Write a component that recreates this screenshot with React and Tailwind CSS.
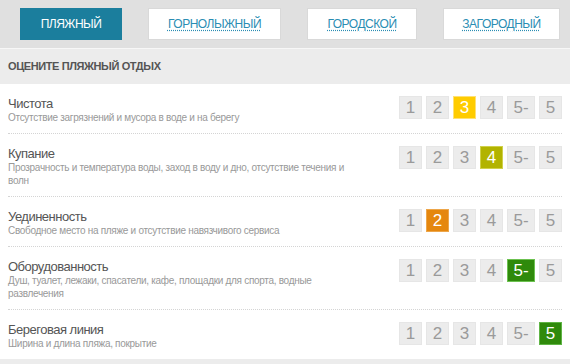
const tabs = [
  { label: "ПЛЯЖНЫЙ", w: "w-[102px]", active: true },
  { label: "ГОРНОЛЫЖНЫЙ", w: "w-[133px]" },
  { label: "ГОРОДСКОЙ", w: "w-[110px]" },
  { label: "ЗАГОРОДНЫЙ", w: "w-[117px]" },
];

const marks = ["1", "2", "3", "4", "5-", "5"];

const activeStyles = {
  "2": "bg-[#e5870e] border-[#eda64a] text-white",
  "3": "bg-[#ffcc00] border-[#ffe173] text-white",
  "4": "bg-[#b2b300] border-[#cfd04a] text-white",
  "5-": "bg-[#2f8a0b] border-[#6cc150] text-white",
  "5": "bg-[#2f8a0b] border-[#5fb445] text-white",
};

const rows = [
  { title: "Чистота", desc: "Отсутствие загрязнений и мусора в воде и на берегу", score: "3" },
  {
    title: "Купание",
    desc: "Прозрачность и температура воды, заход в воду и дно, отсутствие течения и волн",
    score: "4",
  },
  { title: "Уединенность", desc: "Свободное место на пляже и отсутствие навязчивого сервиса", score: "2" },
  {
    title: "Оборудованность",
    desc: "Душ, туалет, лежаки, спасатели, кафе, площадки для спорта, водные развлечения",
    score: "5-",
  },
  { title: "Береговая линия", desc: "Ширина и длина пляжа, покрытие", score: "5", last: true },
];

function Rating({ score }) {
  return (
    <div className="flex gap-[4px] shrink-0">
      {marks.map((m) => (
        <div
          key={m}
          className={`h-[23px] ${m === "5-" ? "w-[28px]" : "w-[23px]"} flex items-center justify-center border text-[17px] leading-none ${
            m === score ? activeStyles[m] : "bg-[#ececec] border-[#e6e6e6] text-[#9a9a9a]"
          }`}
        >
          {m}
        </div>
      ))}
    </div>
  );
}

export default function App() {
  return (
    <div className="w-[570px] min-h-[364px] bg-white font-['Liberation_Sans',Arial,sans-serif]">
      {/* tabs */}
      <div className="h-[49px] bg-[#e0e0e0] border-b border-[#f7f7f7] flex items-start gap-[26px] pl-[20px] pt-[8px]">
        {tabs.map((t) => (
          <div
            key={t.label}
            className={`${t.w} h-[32px] flex items-center justify-center text-[12px] tracking-[-0.5px] ${
              t.active ? "bg-[#1b7e9d] text-white" : "bg-white border border-[#d9d9d9] text-[#2a8db3]"
            }`}
          >
            <span className={t.active ? "" : "underline decoration-dotted underline-offset-2"}>{t.label}</span>
          </div>
        ))}
      </div>

      {/* header */}
      <div className="h-[35px] bg-[#ececec] flex items-center px-[8px] text-[11px] font-bold tracking-[-0.4px] text-[#555]">
        ОЦЕНИТЕ ПЛЯЖНЫЙ ОТДЫХ
      </div>

      {/* rows */}
      <div className="px-[8px]">
        {rows.map((r) => (
          <div
            key={r.title}
            className={`flex justify-between gap-[20px] pt-[12px] pb-[9px] ${r.last ? "" : "border-b border-dotted border-[#d4d4d4]"}`}
          >
            <div className="pt-[1px] max-w-[355px]">
              <div className="text-[13px] leading-[14px] tracking-[-0.5px] text-[#555]">{r.title}</div>
              <div className="text-[10px] leading-[13px] tracking-[-0.3px] text-[#999]">{r.desc}</div>
            </div>
            <Rating score={r.score} />
          </div>
        ))}
      </div>
      <div className="h-[6px] bg-[#ececec]" />
    </div>
  );
}
